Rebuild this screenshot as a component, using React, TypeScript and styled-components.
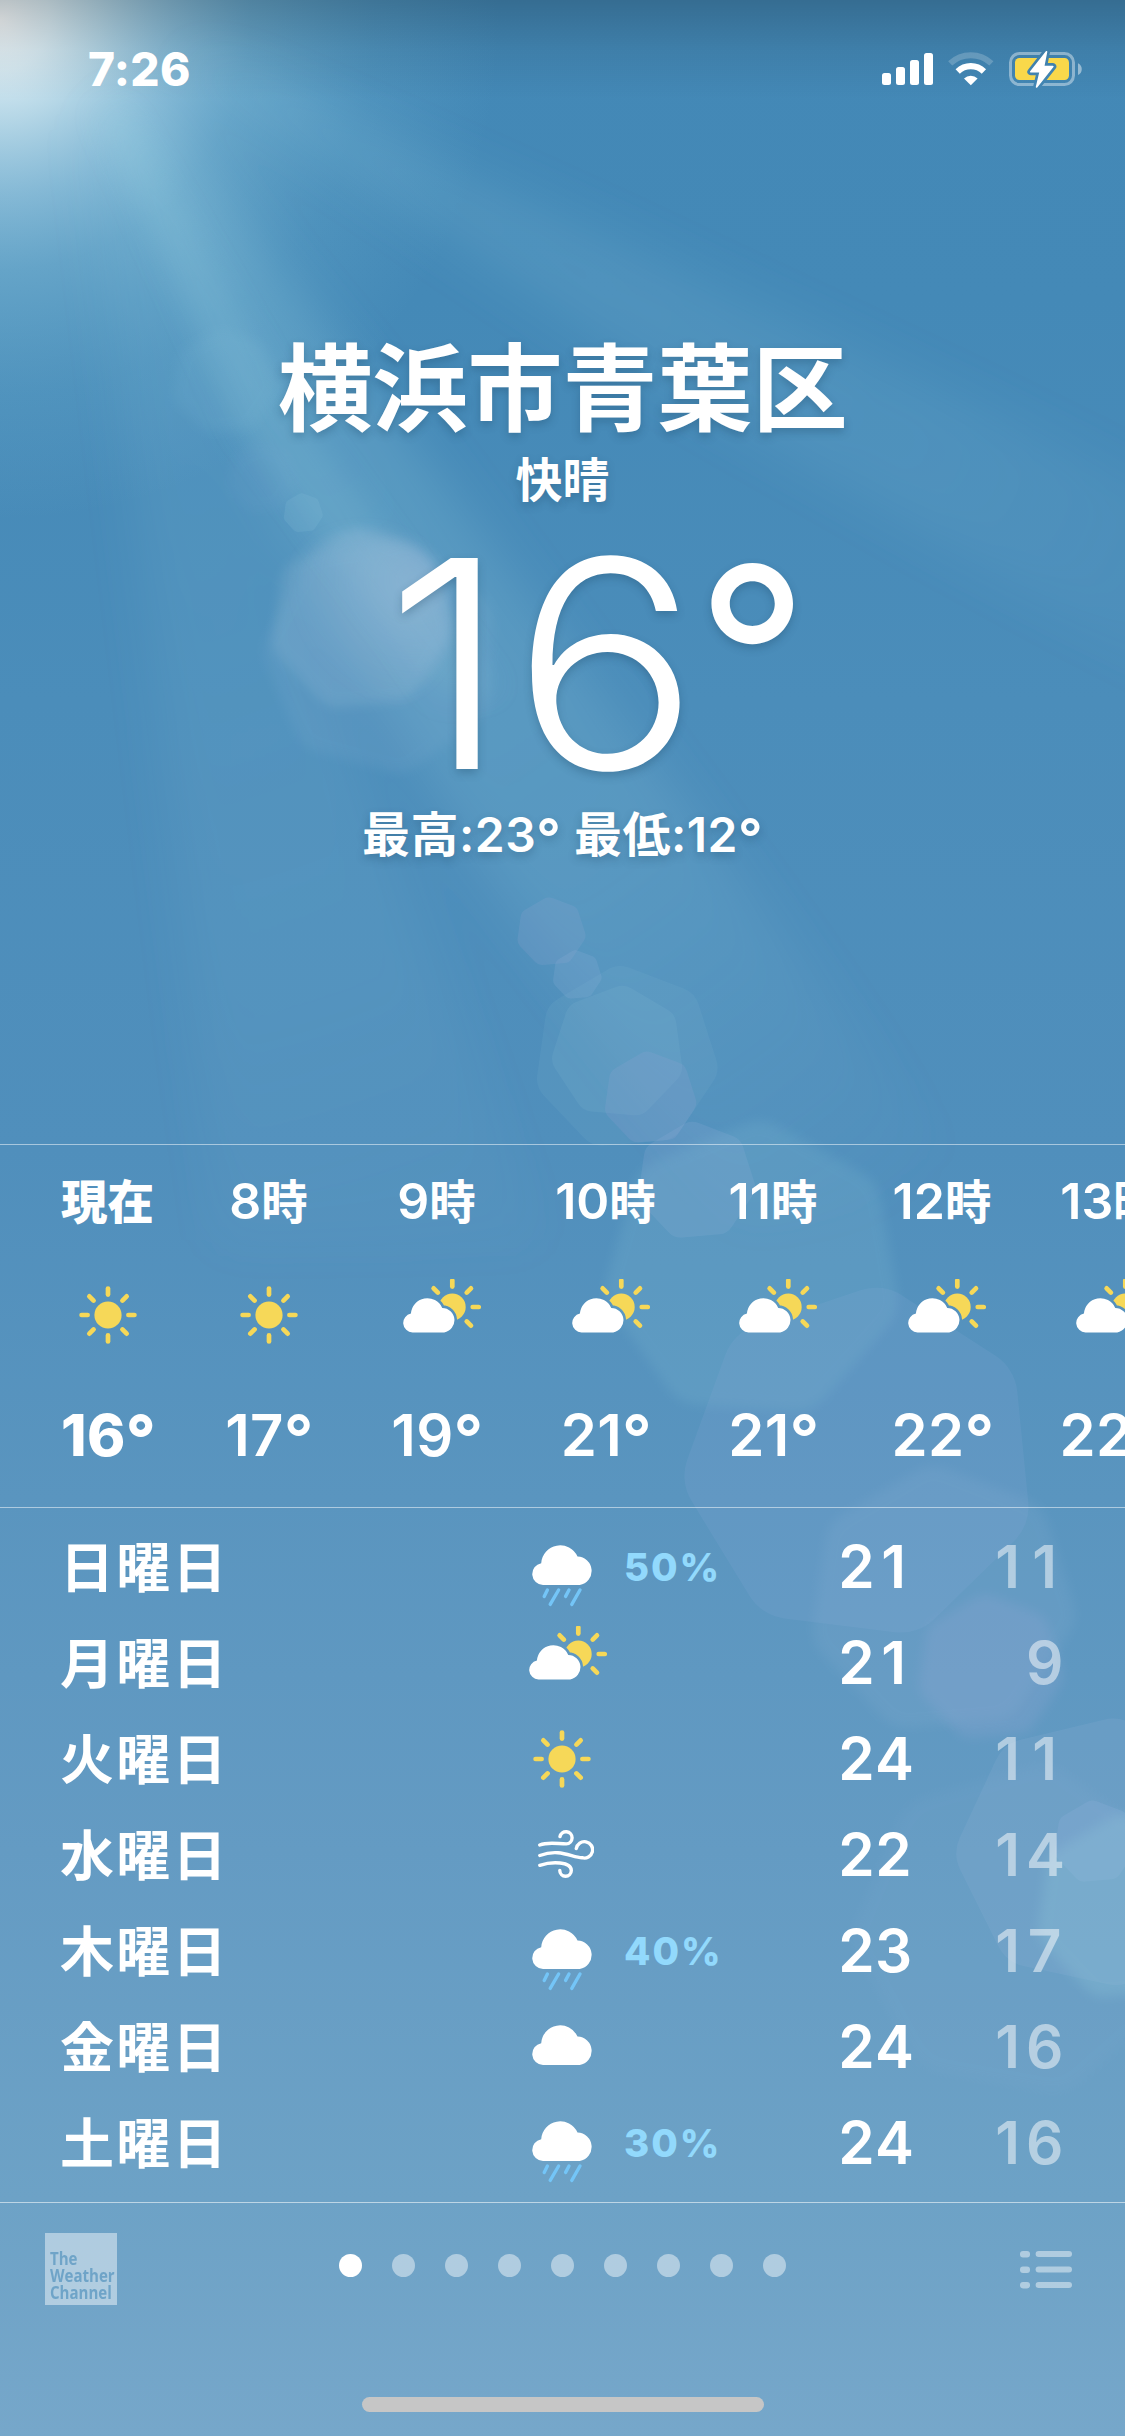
import React from 'react';
import styled, { createGlobalStyle } from 'styled-components';

const GlobalStyle = createGlobalStyle`
  html, body { margin: 0; padding: 0; background: #4d8dba; }
  * { box-sizing: border-box; }
`;

const Screen = styled.main`
  position: relative;
  display: flex;
  flex-direction: column;
  width: 1125px;
  height: 2436px;
  overflow: hidden;
  color: #fff;
  font-family: Inter, 'Noto Sans CJK JP', sans-serif;
  font-weight: 600;
  background: linear-gradient(
    to bottom,
    #4388b6 0px,
    #4489b7 300px,
    #4b8dba 700px,
    #508fbc 1150px,
    #5a95bf 1500px,
    #649bc3 1850px,
    #6da2c6 2200px,
    #76a7ca 2436px
  );
`;

const Sky = styled.svg`
  position: absolute;
  inset: 0;
  width: 1125px;
  height: 2436px;
`;

const StatusBar = styled.header`
  position: relative;
  display: flex;
  justify-content: space-between;
  height: 132px;
  padding: 51px 42px 0 88px;
`;

const Clock = styled.div`
  height: 36px;
  font-size: 46px;
  line-height: 36px;
  font-weight: 800;
  letter-spacing: 0.3px;
`;

const StatusIcons = styled.div`
  display: flex;
  align-items: flex-start;
  height: 38px;
`;

const SignalSvg = styled.svg`
  width: 52px;
  height: 38px;
  margin-right: 14px;
`;
const WifiSvg = styled.svg`
  width: 46px;
  height: 38px;
  margin-right: 15px;
`;
const BatterySvg = styled.svg`
  width: 74px;
  height: 38px;
`;

const Hero = styled.section`
  position: relative;
  display: flex;
  flex-direction: column;
  align-items: center;
  height: 1012px;
  padding-top: 200px;
  white-space: nowrap;
  text-shadow: 0 4px 8px rgba(20, 60, 90, 0.28);
`;

const City = styled.h1`
  margin: 0;
  height: 116px;
  line-height: 116px;
  font-size: 95px;
  font-weight: 600;
`;

const Condition = styled.div`
  height: 64px;
  font-size: 47px;
  line-height: 64px;
`;

const Temperature = styled.div`
  display: flex;
  height: 212px;
  margin-top: 46px;
  padding-left: 69px;
  font-size: 290px;
  line-height: 212px;
  font-weight: 300;
`;

const TemperatureDigits = styled.span`
  letter-spacing: 4px;
  transform: scaleX(1.075);
  transform-origin: left;
`;

const DegreeSign = styled.span`
  margin-left: 14px;
  font-size: 248px;
  line-height: 195px;
  font-weight: 400;
`;

const Range = styled.div`
  height: 64px;
  margin-top: 33px;
  font-size: 48px;
  line-height: 64px;
  letter-spacing: 0.5px;
`;

const Deg = styled.span`
  font-size: 1.12em;
  line-height: 0;
  vertical-align: -0.09em;
`;

const Hourly = styled.section`
  position: relative;
  display: flex;
  height: 363px;
  padding-left: 27px;
  border-top: 1px solid rgba(255, 255, 255, 0.5);
  overflow: hidden;
`;

const Hour = styled.div<{ $now?: boolean; $w: number }>`
  flex: none;
  display: flex;
  flex-direction: column;
  align-items: center;
  width: ${(p) => p.$w}px;
  font-weight: ${(p) => (p.$now ? 800 : 600)};
  white-space: nowrap;
`;

const HourLabel = styled.div`
  height: 60px;
  margin-top: 26px;
  font-size: 50px;
  line-height: 60px;
`;

const Kanji = styled.span`
  font-size: 46.5px;
`;

const HourIcon = styled.div<{ $part: boolean }>`
  display: flex;
  align-items: ${(p) => (p.$part ? 'flex-start' : 'center')};
  height: 60px;
  margin-top: 54px;
  padding-left: ${(p) => (p.$part ? 10 : 0)}px;
  svg { margin-top: ${(p) => (p.$part ? -6 : 0)}px; }
`;

const HourTemp = styled.div`
  height: 60px;
  margin-top: 60px;
  padding-left: 2px;
  font-size: 58px;
  line-height: 60px;
  letter-spacing: 0.3px;
`;

const Daily = styled.section`
  position: relative;
  height: 695px;
  padding: 11px 60px 0;
  border-top: 1px solid rgba(255, 255, 255, 0.5);
`;

const DayRow = styled.div`
  display: grid;
  grid-template-columns: 467px 97px 159px 129px 151px;
  align-items: center;
  height: 96px;
`;

const DayName = styled.div`
  padding-top: 3px;
  font-size: 54px;
  line-height: 93px;
  letter-spacing: 2.2px;
`;

const DayIcon = styled.div<{ $x: number; $y: number }>`
  display: flex;
  align-items: flex-start;
  height: 96px;
  padding: ${(p) => p.$y}px 0 0 ${(p) => p.$x}px;
`;

const Chance = styled.div`
  font-size: 38.5px;
  line-height: 96px;
  font-weight: 800;
  letter-spacing: 1.9px;
  color: #92d9fc;
`;

const Degree = styled.div<{ $dim?: boolean }>`
  display: flex;
  justify-content: flex-end;
  font-size: 58.5px;
  line-height: 96px;
  opacity: ${(p) => (p.$dim ? 0.5 : 1)};
`;

const Digit = styled.span`
  width: 37px;
  text-align: center;
`;

const Footer = styled.footer`
  position: relative;
  display: flex;
  flex-direction: column;
  align-items: center;
  height: 234px;
  border-top: 1px solid rgba(255, 255, 255, 0.55);
`;

const Toolbar = styled.div`
  display: flex;
  align-items: flex-start;
  justify-content: space-between;
  width: 100%;
  height: 194px;
  padding: 30px 53px 0 45px;
`;

const Channel = styled.div`
  width: 72px;
  height: 72px;
  padding: 17px 0 0 5px;
  background: rgba(255, 255, 255, 0.45);
  color: #6fa4c8;
  font-family: 'Open Sans', 'Noto Sans', sans-serif;
  font-weight: 700;
  font-size: 17.5px;
  line-height: 17px;
`;

const ChannelText = styled.div`
  width: max-content;
  transform: scaleX(0.86);
  transform-origin: left;
`;

const Pages = styled.div`
  display: flex;
  gap: 30px;
  margin: 21px 0 0 -13px;
`;

const Dot = styled.span<{ $on?: boolean }>`
  width: 23px;
  height: 23px;
  border-radius: 50%;
  background: ${(p) => (p.$on ? '#fff' : 'rgba(255,255,255,0.45)')};
`;

const ListSvg = styled.svg`
  width: 52px;
  height: 38px;
  margin-top: 18px;
`;

const HomeBar = styled.div`
  width: 402px;
  height: 15px;
  border-radius: 8px;
  background: #c6c6c6;
`;

const YELLOW = '#f6d858';
const CLOUD = 'M11 40A11 11 0 0 1 9.2 18.2A19 19 0 0 1 45.5 11.6A14.3 14.3 0 0 1 47.7 40Z';

const Rays = ({ angles }: { angles: number[] }) => (
  <g stroke={YELLOW} strokeWidth="4.7" strokeLinecap="round">
    {angles.map((a) => (
      <line key={a} x1="0" y1="-20.4" x2="0" y2="-26.4" transform={`rotate(${a})`} />
    ))}
  </g>
);

const SunIcon = () => (
  <svg width="58" height="58" viewBox="-29 -29 58 58">
    <circle r="13.6" fill={YELLOW} />
    <Rays angles={[0, 45, 90, 135, 180, 225, 270, 315]} />
  </svg>
);

const CloudSunIcon = ({ id }: { id: string }) => (
  <svg width="78" height="54" viewBox="0 0 78 54">
    <mask id={id} maskUnits="userSpaceOnUse" x="0" y="0" width="78" height="54">
      <rect width="78" height="54" fill="#fff" />
      <path d={CLOUD} transform="translate(0 18.9) scale(.863)" fill="#000" stroke="#000" strokeWidth="6" />
    </mask>
    <g mask={`url(#${id})`}>
      <circle cx="49.3" cy="28" r="13.4" fill={YELLOW} />
    </g>
    <g transform="translate(49.3 28)">
      <Rays angles={[-45, 0, 45, 90, 135]} />
    </g>
    <path d={CLOUD} transform="translate(0 18.9) scale(.863)" fill="#fff" />
  </svg>
);

const CloudIcon = ({ rain }: { rain?: boolean }) => (
  <svg width="62" height="62" viewBox="0 0 62 62">
    <path d={CLOUD} fill="#fff" />
    {rain && (
      <path
        d="M15.4 45L12.2 51.4M26.6 45L18.2 59.4M37 45L33.6 51.4M48 45L39.8 59.4"
        stroke="#74c5f7"
        strokeWidth="3.4"
        strokeLinecap="round"
      />
    )}
  </svg>
);

const WindIcon = () => (
  <svg width="56" height="49" viewBox="0 0 56 49">
    <path
      d="M1.8 15C10 11.5 20 13.9 28.3 13.9A6.1 6.1 0 1 0 22 6.6M1.8 25.5C22 18 34 27.7 44 27.7A8.2 8.2 0 1 0 38.3 18.6M1.8 35.3C14 31.3 33.3 31.5 33.3 40.5A5.75 5.75 0 0 1 21.8 40.5"
      fill="none"
      stroke="#fff"
      strokeWidth="3.4"
      strokeLinecap="round"
    />
  </svg>
);

type Bokeh = { x: number; y: number; r: number; c: string; o: number; b?: boolean; rot?: number };
const bokeh: Bokeh[] = [
  { x: 225, y: 382, r: 54, c: '#8fc6de', o: 0.1, b: true },
  { x: 262, y: 478, r: 36, c: '#8eaedb', o: 0.07, b: true },
  { x: 303, y: 513, r: 20, c: '#8fc6de', o: 0.16 },
  { x: 361, y: 620, r: 92, c: '#a4c6dc', o: 0.2, b: true },
  { x: 382, y: 655, r: 120, c: '#9fbfe0', o: 0.1, b: true, rot: 20 },
  { x: 551, y: 932, r: 35, c: '#98a8d4', o: 0.18 },
  { x: 577, y: 975, r: 25, c: '#98b4dc', o: 0.18 },
  { x: 626, y: 1058, r: 93, c: '#8ec2d8', o: 0.1 },
  { x: 618, y: 1052, r: 67, c: '#8ec2d8', o: 0.13, rot: 10 },
  { x: 650, y: 1098, r: 47, c: '#98a6d6', o: 0.18 },
  { x: 696, y: 1181, r: 60, c: '#98b0dc', o: 0.18 },
  { x: 753, y: 1270, r: 150, c: '#88c4d8', o: 0.17, b: true, rot: 8 },
  { x: 860, y: 1463, r: 178, c: '#92aedc', o: 0.14, rot: 12 },
  { x: 942, y: 1600, r: 135, c: '#9cbcdc', o: 0.13, b: true },
  { x: 990, y: 1668, r: 74, c: '#9aaad8', o: 0.22, b: true },
  { x: 1020, y: 1930, r: 168, c: '#98b8dc', o: 0.07, b: true, rot: 15 },
  { x: 1092, y: 1852, r: 137, c: '#9cb8dc', o: 0.15, rot: 17 },
  { x: 1095, y: 1842, r: 42, c: '#98b4e0', o: 0.2 },
  { x: 1128, y: 1908, r: 94, c: '#94ccdc', o: 0.25, b: true },
];

const heptagon = (x: number, y: number, r: number, rot = 0) =>
  Array.from({ length: 7 }, (_, i) => {
    const a = ((i * 360) / 7 + 8 + rot) * (Math.PI / 180);
    return `${(x + r * Math.cos(a)).toFixed(1)},${(y + r * Math.sin(a)).toFixed(1)}`;
  }).join(' ');

const Backdrop = () => (
  <Sky viewBox="0 0 1125 2436">
    <defs>
      <radialGradient id="halo" gradientUnits="userSpaceOnUse" cx="0" cy="20" r="500">
        <stop offset="0" stopColor="#fbfdfd" stopOpacity=".96" />
        <stop offset=".1" stopColor="#ecf8fb" stopOpacity=".88" />
        <stop offset=".2" stopColor="#daf0f6" stopOpacity=".75" />
        <stop offset=".35" stopColor="#b8dfee" stopOpacity=".56" />
        <stop offset=".5" stopColor="#9bd0e4" stopOpacity=".38" />
        <stop offset=".75" stopColor="#86c4dc" stopOpacity=".16" />
        <stop offset="1" stopColor="#86c4dc" stopOpacity="0" />
      </radialGradient>
      <linearGradient id="shade" x1="0" y1="0" x2="0" y2="1">
        <stop offset="0" stopColor="#000" stopOpacity=".2" />
        <stop offset=".5" stopColor="#000" stopOpacity=".07" />
        <stop offset="1" stopColor="#000" stopOpacity="0" />
      </linearGradient>
      <radialGradient id="fade" gradientUnits="userSpaceOnUse" cx="0" cy="0" r="1500">
        <stop offset="0" stopColor="#a4d8e8" stopOpacity=".35" />
        <stop offset=".35" stopColor="#90cade" stopOpacity=".36" />
        <stop offset=".7" stopColor="#8cc4da" stopOpacity=".28" />
        <stop offset="1" stopColor="#8cc4da" stopOpacity="0" />
      </radialGradient>
      <radialGradient id="flare" gradientUnits="userSpaceOnUse" cx="415" cy="580" r="125">
        <stop offset="0" stopColor="#b4c6e2" stopOpacity=".3" />
        <stop offset="1" stopColor="#b4c6e2" stopOpacity="0" />
      </radialGradient>
      <filter id="soft" x="-20%" y="-20%" width="140%" height="140%">
        <feGaussianBlur stdDeviation="24" />
      </filter>
      <filter id="beam" x="-20%" y="-20%" width="140%" height="140%">
        <feGaussianBlur stdDeviation="14" />
      </filter>
      <filter id="edge" x="-60%" y="-60%" width="220%" height="220%">
        <feGaussianBlur stdDeviation="6" />
      </filter>
    </defs>
    <rect width="520" height="530" fill="url(#halo)" />
    <g fill="url(#fade)" filter="url(#soft)">
      <polygon points="180,60 240,70 600,230 1180,500 1180,680 640,370" opacity=".42" />
      <polygon points="110,110 150,110 360,370 620,720 980,1200 740,1220 480,860 280,540" opacity=".68" />
      <polygon points="90,130 110,130 320,660 540,1240 220,1240 150,640" opacity=".32" />
    </g>
    <polygon
      points="95,110 125,110 290,400 500,690 440,700 240,430"
      fill="url(#fade)"
      filter="url(#beam)"
      opacity=".55"
    />
    {bokeh.map((k, i) => (
      <polygon
        key={i}
        points={heptagon(k.x, k.y, k.r * 0.72, k.rot)}
        fill={k.c}
        stroke={k.c}
        strokeWidth={k.r * 0.54}
        strokeLinejoin="round"
        opacity={k.o}
        filter={k.b ? 'url(#edge)' : undefined}
      />
    ))}
    <circle cx="361" cy="620" r="92" fill="url(#flare)" filter="url(#edge)" />
    <rect width="1125" height="100" fill="url(#shade)" />
  </Sky>
);

const hours = [
  { digits: '', kanji: '現在', icon: 'sun', temp: '16', w: 161 },
  { digits: '8', kanji: '時', icon: 'sun', temp: '17', w: 161 },
  { digits: '9', kanji: '時', icon: 'part', temp: '19', w: 175 },
  { digits: '10', kanji: '時', icon: 'part', temp: '21', w: 163 },
  { digits: '11', kanji: '時', icon: 'part', temp: '21', w: 172 },
  { digits: '12', kanji: '時', icon: 'part', temp: '22', w: 166 },
  { digits: '13', kanji: '時', icon: 'part', temp: '22', w: 170 },
];

const days = [
  { day: '日曜日', icon: 'rain', chance: '50%', hi: '21', lo: '11' },
  { day: '月曜日', icon: 'part', chance: '', hi: '21', lo: '9' },
  { day: '火曜日', icon: 'sun', chance: '', hi: '24', lo: '11' },
  { day: '水曜日', icon: 'wind', chance: '', hi: '22', lo: '14' },
  { day: '木曜日', icon: 'rain', chance: '40%', hi: '23', lo: '17' },
  { day: '金曜日', icon: 'cloud', chance: '', hi: '24', lo: '16' },
  { day: '土曜日', icon: 'rain', chance: '30%', hi: '24', lo: '16' },
];

const iconOffset: Record<string, [number, number]> = {
  rain: [4.9, 26],
  cloud: [4.9, 26],
  part: [1.7, 11],
  sun: [6.2, 18.5],
  wind: [10.5, 23],
};

const WeatherIcon = ({ kind, id }: { kind: string; id: string }) => {
  if (kind === 'sun') return <SunIcon />;
  if (kind === 'part') return <CloudSunIcon id={id} />;
  if (kind === 'wind') return <WindIcon />;
  return <CloudIcon rain={kind === 'rain'} />;
};

const Digits = ({ value }: { value: string }) => (
  <>
    {value.split('').map((ch, i) => (
      <Digit key={i}>{ch}</Digit>
    ))}
  </>
);

export default function App() {
  return (
    <>
      <GlobalStyle />
      <Screen>
        <Backdrop />
        <StatusBar>
          <Clock>7:26</Clock>
          <StatusIcons>
            <SignalSvg viewBox="0 0 52 38" fill="#fff">
              <rect x="0" y="22" width="9" height="12" rx="2.5" />
              <rect x="14" y="16" width="9" height="18" rx="2.5" />
              <rect x="28" y="9" width="9" height="25" rx="2.5" />
              <rect x="42" y="2" width="9" height="32" rx="2.5" />
            </SignalSvg>
            <WifiSvg viewBox="0 -1 46 38" fill="none" stroke="#fff">
              <path d="M2.2 11.4A30 30 0 0 1 43.4 11.4" strokeWidth="6" opacity=".2" />
              <path d="M9.7 19.4A19 19 0 0 1 35.9 19.4" strokeWidth="6.2" />
              <path d="M16 26.4A10 10 0 0 1 29.6 26.4L22.8 33.2Z" fill="#fff" stroke="none" />
            </WifiSvg>
            <BatterySvg viewBox="0 0 74 38">
              <mask id="boltgap" maskUnits="userSpaceOnUse" x="0" y="-2" width="74" height="42">
                <rect y="-2" width="74" height="42" fill="#fff" />
                <path d="M37.5 .8L21.8 20.8H31.2L27.6 36L43.8 15.6H34.6Z" fill="#000" stroke="#000" strokeWidth="7" strokeLinejoin="round" />
              </mask>
              <g mask="url(#boltgap)">
                <rect x="1.5" y="2.5" width="63" height="31" rx="9" fill="none" stroke="#fff" strokeWidth="3" opacity=".4" />
                <rect x="6" y="7" width="54" height="22" rx="4.5" fill="#f9d84a" />
              </g>
              <path d="M69 12.2C74 14.2 74 22 69 24Z" fill="#fff" opacity=".45" />
              <path d="M37.5 .8L21.8 20.8H31.2L27.6 36L43.8 15.6H34.6Z" fill="#fff" stroke="#fff" strokeWidth="1.6" strokeLinejoin="round" />
            </BatterySvg>
          </StatusIcons>
        </StatusBar>

        <Hero>
          <City>横浜市青葉区</City>
          <Condition>快晴</Condition>
          <Temperature>
            <TemperatureDigits>16</TemperatureDigits>
            <DegreeSign>°</DegreeSign>
          </Temperature>
          <Range>
            最高:23<Deg>°</Deg> 最低:12<Deg>°</Deg>
          </Range>
        </Hero>

        <Hourly>
          {hours.map((h, i) => (
            <Hour key={h.digits} $w={h.w} $now={i === 0}>
              <HourLabel>
                {h.digits}
                <Kanji>{h.kanji}</Kanji>
              </HourLabel>
              <HourIcon $part={h.icon === 'part'}>
                <WeatherIcon kind={h.icon} id={`hour${i}`} />
              </HourIcon>
              <HourTemp>
                {h.temp}
                <Deg>°</Deg>
              </HourTemp>
            </Hour>
          ))}
        </Hourly>

        <Daily>
          {days.map((d, i) => (
            <DayRow key={d.day}>
              <DayName>{d.day}</DayName>
              <DayIcon $x={iconOffset[d.icon][0]} $y={iconOffset[d.icon][1]}>
                <WeatherIcon kind={d.icon} id={`day${i}`} />
              </DayIcon>
              <Chance>{d.chance}</Chance>
              <Degree>
                <Digits value={d.hi} />
              </Degree>
              <Degree $dim>
                <Digits value={d.lo} />
              </Degree>
            </DayRow>
          ))}
        </Daily>

        <Footer>
          <Toolbar>
            <Channel>
              <ChannelText>The</ChannelText>
              <ChannelText>Weather</ChannelText>
              <ChannelText>Channel</ChannelText>
            </Channel>
            <Pages>
              {Array.from({ length: 9 }, (_, i) => (
                <Dot key={i} $on={i === 0} />
              ))}
            </Pages>
            <ListSvg viewBox="0 0 52 38" fill="#fff" fillOpacity=".45">
              {[0, 15.5, 31].map((y) => (
                <g key={y}>
                  <rect y={y} width="10" height="6.4" rx="3" />
                  <rect x="15.6" y={y} width="36.4" height="6" rx="3" />
                </g>
              ))}
            </ListSvg>
          </Toolbar>
          <HomeBar />
        </Footer>
      </Screen>
    </>
  );
}
